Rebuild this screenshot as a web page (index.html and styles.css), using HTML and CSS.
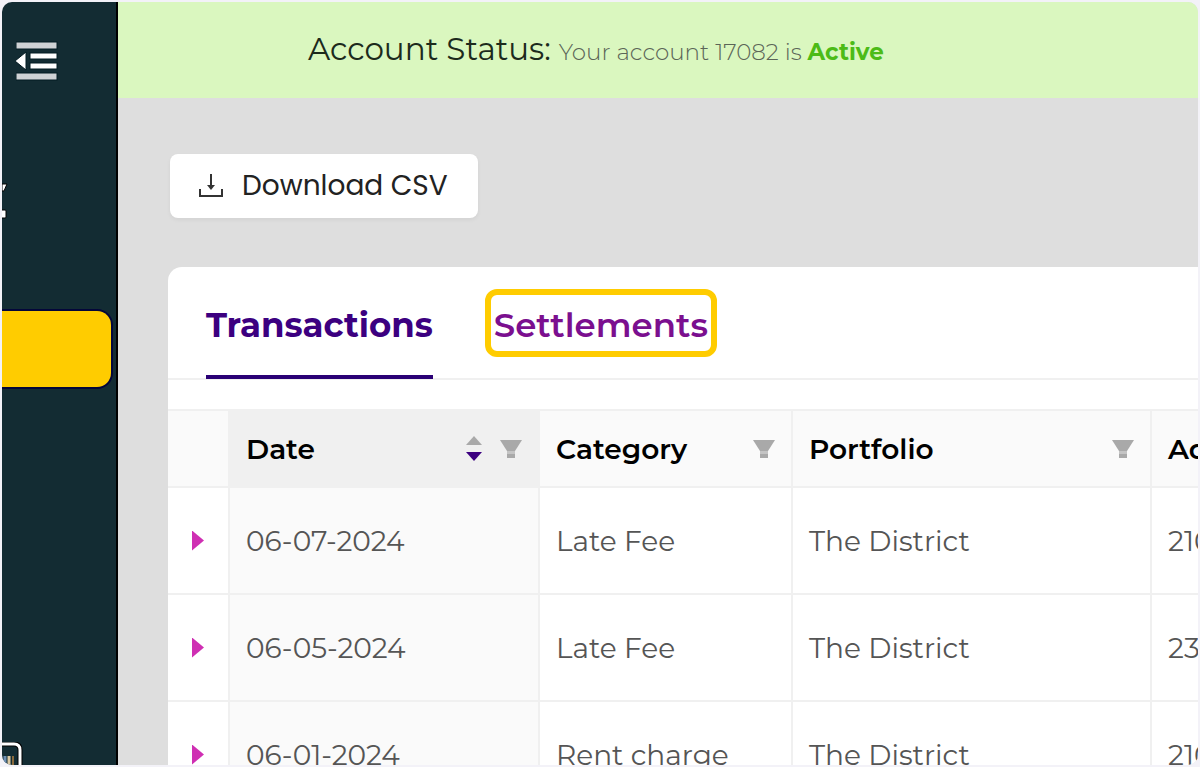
FILE: index.html
```html
<!DOCTYPE html>
<html lang="en">
<head>
  <meta charset="UTF-8">
  <meta name="viewport" content="width=device-width, initial-scale=1.0">
  <title>Transactions</title>
  <link rel="stylesheet" href="styles.css">
</head>
<body>
  <div class="frame">
    <aside class="sidebar">
      <button class="menu-toggle" type="button" aria-label="Collapse menu">
        <svg width="42" height="42" viewBox="0 0 42 42" stroke="#031a22" stroke-width="1">
          <rect x="0" y="2" width="41" height="7" fill="#cfd2d5"/>
          <rect x="14" y="13" width="27" height="6" fill="#fff"/>
          <rect x="14" y="23" width="27" height="6" fill="#fff"/>
          <rect x="0" y="33" width="41" height="7" fill="#cfd2d5"/>
          <path d="M-1 21L10 12V30Z" fill="#fff"/>
        </svg>
      </button>
      <nav class="side-nav">
        <a href="#" class="side-link" aria-label="Dashboard">
          <svg width="6" height="40" viewBox="0 0 6 40">
            <path d="M0 3H5L2 10H0Z" fill="#fff" stroke="#000" stroke-width="1"/>
            <rect x="-2" y="29" width="6" height="8" rx="1" fill="#fff" stroke="#000" stroke-width="1"/>
          </svg>
        </a>
        <a href="#" class="side-link active" aria-label="Transactions"></a>
      </nav>
      <a href="#" class="side-bottom" aria-label="Reports">
        <svg width="21" height="23" viewBox="0 0 21 23" fill="none">
          <path d="M-2 2H12Q18 2 18 8V25" stroke="#000" stroke-width="5"/>
          <path d="M-2 2H12Q18 2 18 8V25" stroke="#fff" stroke-width="3"/>
          <path d="M3 14V23" stroke="#6d8fb5" stroke-width="3"/>
          <path d="M7 14V23" stroke="#d9c8a4" stroke-width="3"/>
          <path d="M11 14V23" stroke="#8a6a3c" stroke-width="2"/>
        </svg>
      </a>
    </aside>

    <div class="content">
      <header class="status-bar">
        <span class="status-title">Account Status:</span>
        <span class="status-text">Your account 17082 is <strong>Active</strong></span>
      </header>

      <main>
        <div class="toolbar">
          <button class="download" type="button">
            <svg width="26" height="26" viewBox="0 0 26 26" fill="none" stroke="#333">
              <path d="M13 1V15" stroke-width="2"/>
              <path d="M9 12H17L13 17Z" fill="#333" stroke="none"/>
              <path d="M2 16V23H24V16" stroke-width="2"/>
            </svg>
            Download CSV
          </button>
        </div>

        <section class="card">
          <div class="tabs">
            <a href="#" class="tab current">Transactions</a>
            <a href="#" class="tab marked">Settlements</a>
          </div>

          <table>
            <colgroup>
              <col class="col-expand">
              <col class="col-date">
              <col class="col-category">
              <col class="col-portfolio">
              <col>
            </colgroup>
            <thead>
              <tr>
                <th></th>
                <th class="sorted">
                  <div class="head">Date
                    <span class="tools">
                      <svg width="18" height="28" viewBox="0 0 18 28"><path d="M9 1L17 10H1Z" fill="#a9a9a9"/><path d="M1 17H17L9 26Z" fill="#3c0080"/></svg>
                      <svg width="22" height="20" viewBox="0 0 22 20"><path d="M0 1H22L15 12H7Z" fill="#a9a9a9"/><path d="M7 12H15V15H7Z" fill="#c4c4c4"/><path d="M7 15H15V19H7Z" fill="#a9a9a9"/></svg>
                    </span>
                  </div>
                </th>
                <th>
                  <div class="head">Category
                    <svg width="22" height="20" viewBox="0 0 22 20"><path d="M0 1H22L15 12H7Z" fill="#a9a9a9"/><path d="M7 12H15V15H7Z" fill="#c4c4c4"/><path d="M7 15H15V19H7Z" fill="#a9a9a9"/></svg>
                  </div>
                </th>
                <th>
                  <div class="head">Portfolio
                    <svg width="22" height="20" viewBox="0 0 22 20"><path d="M0 1H22L15 12H7Z" fill="#a9a9a9"/><path d="M7 12H15V15H7Z" fill="#c4c4c4"/><path d="M7 15H15V19H7Z" fill="#a9a9a9"/></svg>
                  </div>
                </th>
                <th>Ad</th>
              </tr>
            </thead>
            <tbody>
              <tr>
                <td><button class="expand" type="button" aria-label="Expand row"></button></td>
                <td class="sorted">06-07-2024</td>
                <td>Late Fee</td>
                <td>The District</td>
                <td>210</td>
              </tr>
              <tr>
                <td><button class="expand" type="button" aria-label="Expand row"></button></td>
                <td class="sorted">06-05-2024</td>
                <td>Late Fee</td>
                <td>The District</td>
                <td>23</td>
              </tr>
              <tr>
                <td><button class="expand" type="button" aria-label="Expand row"></button></td>
                <td class="sorted">06-01-2024</td>
                <td>Rent charge</td>
                <td>The District</td>
                <td>210</td>
              </tr>
            </tbody>
          </table>
        </section>
      </main>
    </div>
  </div>
</body>
</html>
```

FILE: styles.css
```css
* {
  box-sizing: border-box;
}

body {
  margin: 0;
  height: 100vh;
  padding: 2px;
  overflow: hidden;
  background: #f3f2f8;
  font-family: Montserrat, Inter, sans-serif;
  color: #000;
}

a {
  text-decoration: none;
}

svg {
  display: block;
}

.frame {
  display: flex;
  height: 100%;
  border-radius: 10px;
  overflow: hidden;
}

/* sidebar */
.sidebar {
  flex: 0 0 116px;
  display: flex;
  flex-direction: column;
  align-items: flex-start;
  background: #132c33;
  border-right: 2px solid #000;
}

.menu-toggle {
  margin: 38px 0 0 14px;
  padding: 0;
  border: none;
  background: none;
  cursor: pointer;
}

.side-nav {
  display: flex;
  flex-direction: column;
  gap: 72px;
  width: 100%;
  margin-top: 81px;
  padding-right: 5px;
}

.side-link {
  display: flex;
  align-items: center;
  height: 76px;
  border-radius: 0 14px 14px 0;
}

.side-link.active {
  background: #ffcc00;
  box-shadow: 0 0 0 2px #03063a;
}

.side-bottom {
  margin-top: auto;
}

/* content */
.content {
  flex: 1;
  min-width: 0;
  background: #dedede;
}

.status-bar {
  display: flex;
  align-items: baseline;
  gap: 8px;
  height: 96px;
  padding: 27px 20px 0 190px;
  background: #daf7bf;
}

.status-title {
  font-size: 31px;
  line-height: 40px;
  color: #1c2a1c;
}

.status-text {
  font-size: 23px;
  font-weight: 300;
  color: #5b6557;
}

.status-text strong {
  font-weight: 700;
  color: #4cbb17;
}

main {
  padding: 56px 0 0 50px;
}

.toolbar {
  padding-left: 2px;
  margin-bottom: 49px;
}

.download {
  display: flex;
  align-items: center;
  gap: 18px;
  height: 64px;
  padding: 0 30px 0 28px;
  border: none;
  border-radius: 8px;
  background: #fff;
  box-shadow: 0 2px 4px rgba(0, 0, 0, 0.05);
  font-family: Poppins, Inter, sans-serif;
  font-size: 28px;
  color: #222;
  cursor: pointer;
}

.card {
  background: #fff;
  border-radius: 14px 0 0 0;
  overflow: hidden;
}

.tabs {
  display: flex;
  gap: 52px;
  height: 113px;
  padding: 22px 0 0 38px;
  border-bottom: 2px solid #f0f0f0;
  margin-bottom: 29px;
}

.tab {
  font-size: 34px;
  line-height: 56px;
  color: #7b0f8f;
  font-weight: 600;
}

.tab.current {
  height: 90px;
  padding-top: 8px;
  border-bottom: 4px solid #2a0075;
  color: #3c0080;
  font-weight: 700;
}

.tab.marked {
  height: 68px;
  padding: 2px 3px 0;
  border: 6px solid #ffcc00;
  border-radius: 12px;
}

table {
  width: 1340px;
  table-layout: fixed;
  border-spacing: 0;
  border-top: 2px solid #f0f0f0;
}

.col-expand {
  width: 62px;
}

.col-date {
  width: 310px;
}

.col-category {
  width: 253px;
}

.col-portfolio {
  width: 359px;
}

th,
td {
  padding: 0 16px;
  border-right: 2px solid #f0f0f0;
  border-bottom: 2px solid #f0f0f0;
  text-align: left;
  white-space: nowrap;
}

th {
  height: 77px;
  background: #fafafa;
  font-size: 28px;
  font-weight: 600;
}

th.sorted {
  background: #f0f0f0;
}

td {
  height: 107px;
  font-size: 28px;
  font-weight: 400;
  color: #555;
}

td.sorted {
  background: #fafafa;
}

.head {
  display: flex;
  align-items: center;
  justify-content: space-between;
}

.tools {
  display: flex;
  align-items: center;
  gap: 17px;
}

.expand {
  display: block;
  width: 12px;
  height: 20px;
  margin-left: 8px;
  padding: 0;
  border: none;
  background: #cf2fb3;
  clip-path: polygon(0 0, 100% 50%, 0 100%);
  cursor: pointer;
}
```
